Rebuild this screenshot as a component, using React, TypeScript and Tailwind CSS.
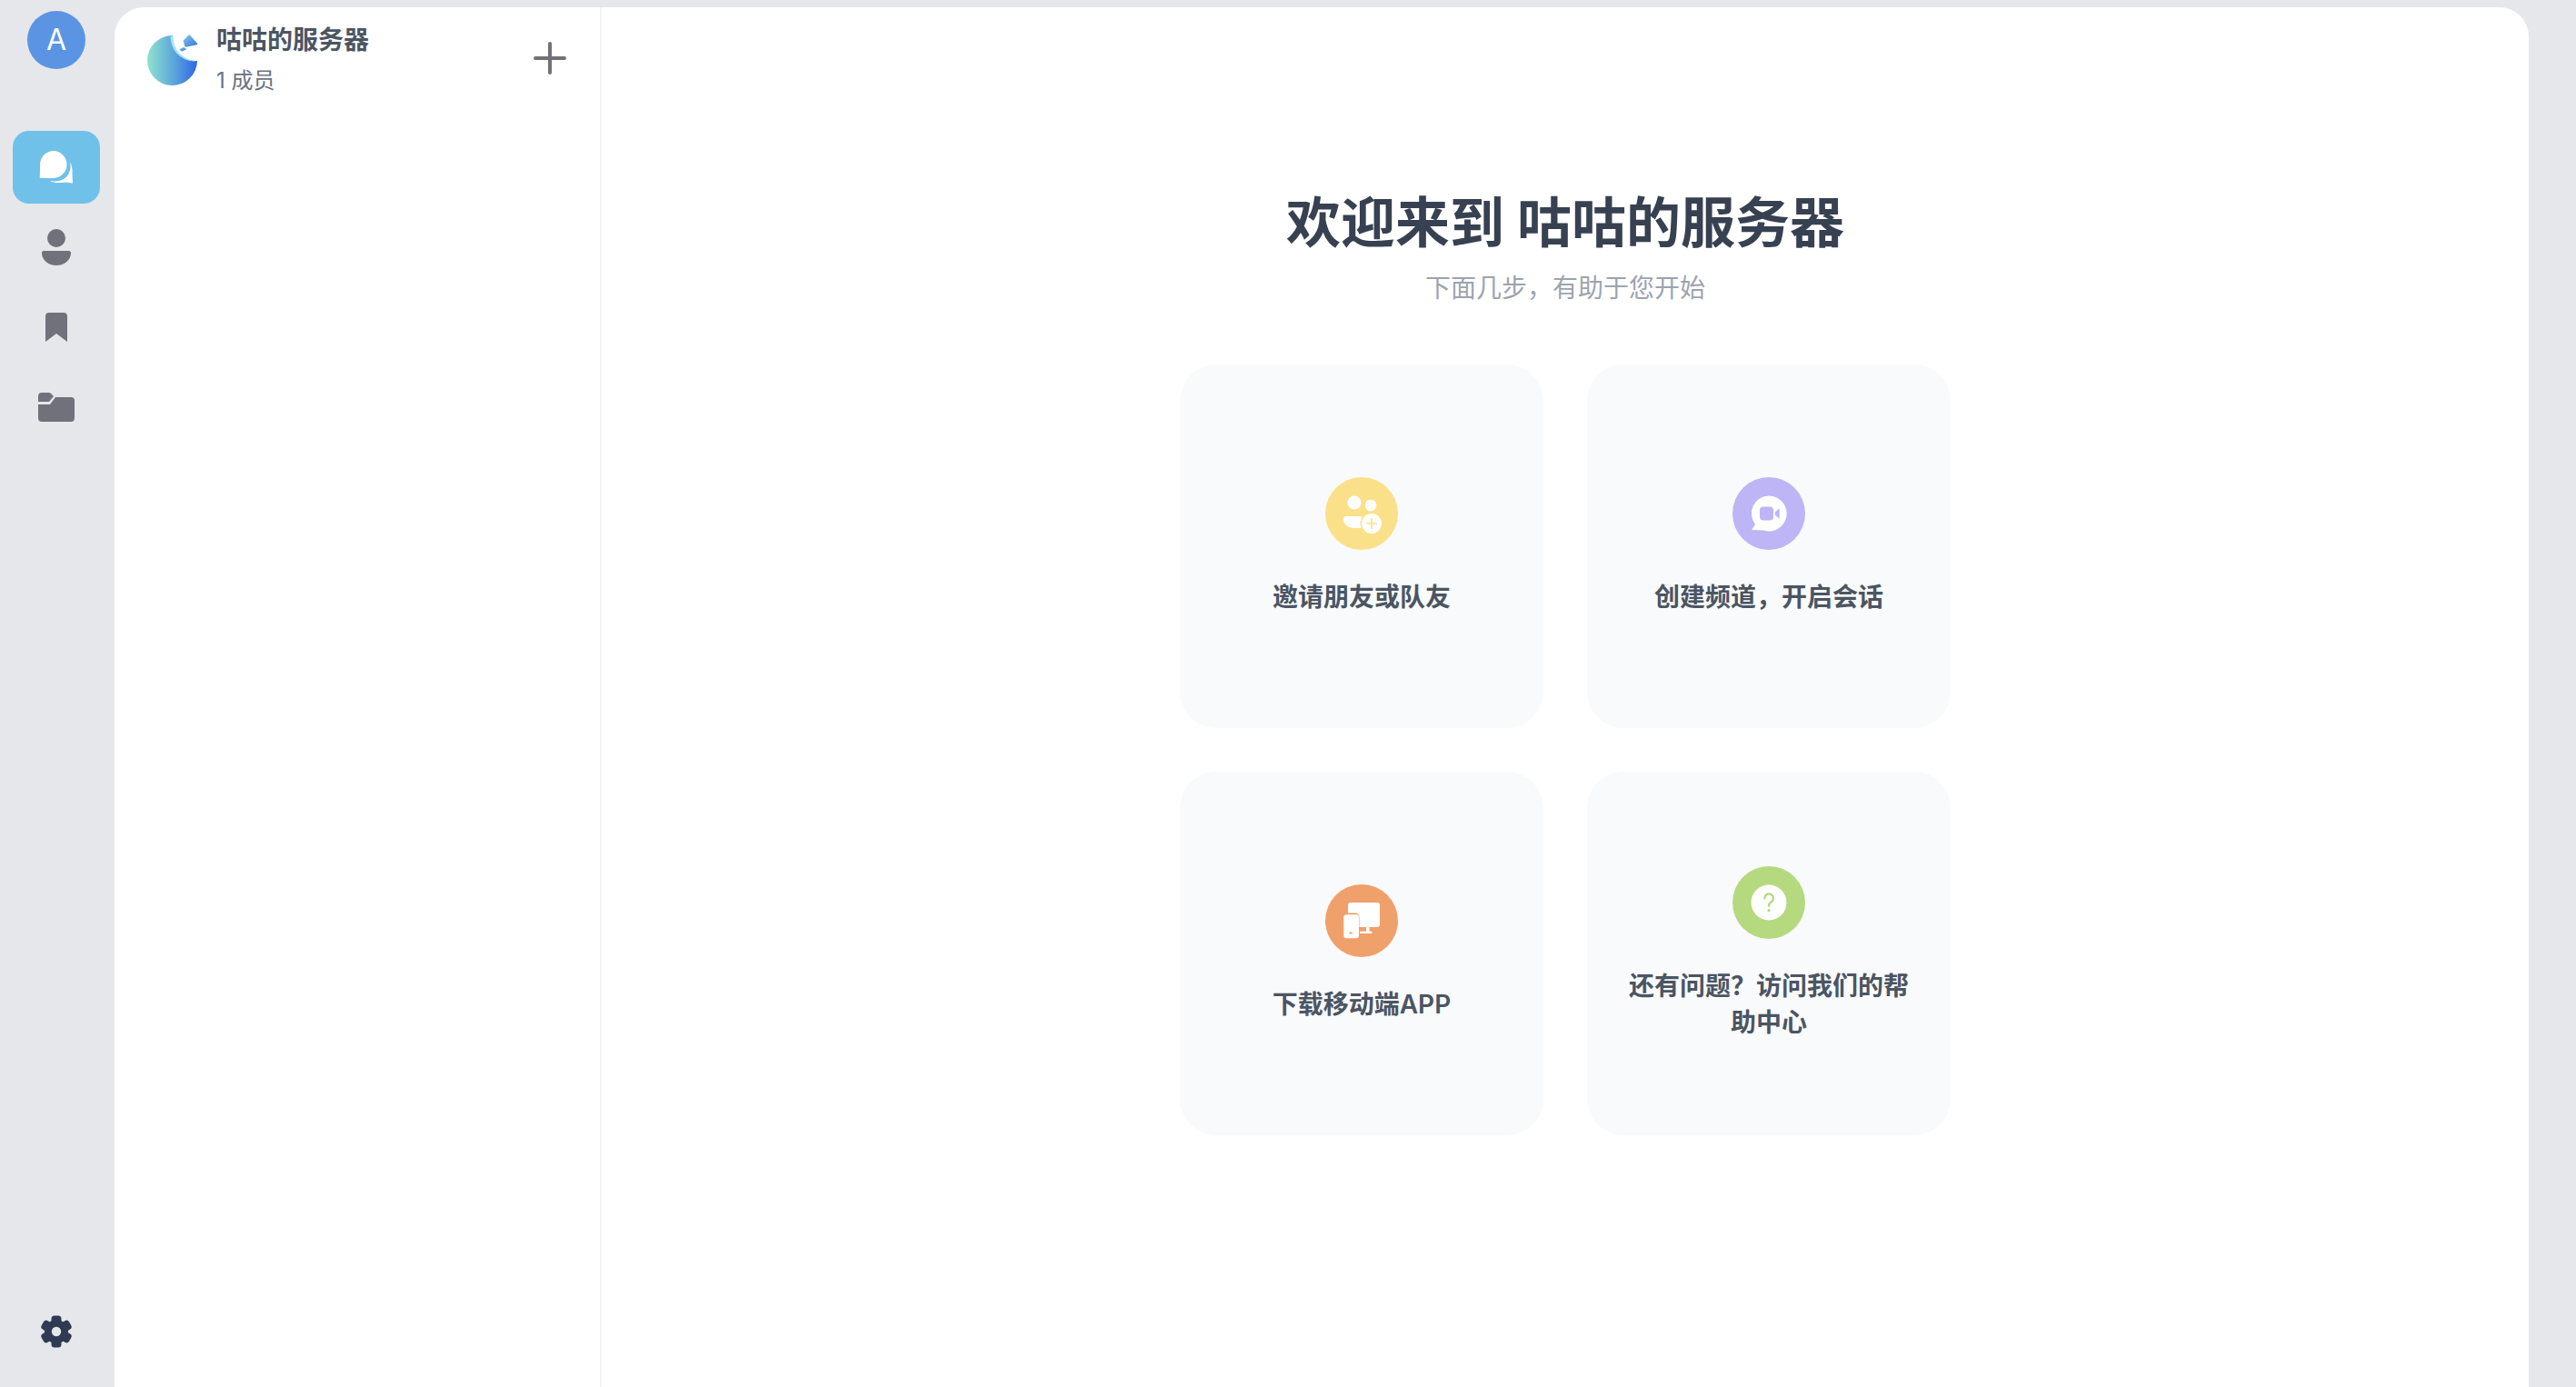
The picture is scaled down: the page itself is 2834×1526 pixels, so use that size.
import React from "react";

const fontStack = { fontFamily: 'Inter, "Noto Sans CJK SC", sans-serif' };

function Logo() {
  return (
    <svg width="64" height="64" viewBox="0 0 64 64">
      <defs>
        <linearGradient id="lg" x1="0" y1="0" x2="1" y2="0">
          <stop offset="0" stopColor="#8fe3cc" />
          <stop offset="0.55" stopColor="#5aa3dc" />
          <stop offset="1" stopColor="#2f66e6" />
        </linearGradient>
        <linearGradient id="lg2" x1="0" y1="0" x2="1" y2="1">
          <stop offset="0" stopColor="#7cc6e0" />
          <stop offset="1" stopColor="#3f74e4" />
        </linearGradient>
      </defs>
      <path d="M32 5A27.5 27.5 0 1 0 59 33A26 26 0 0 1 32 5Z" fill="url(#lg)" />
      <path d="M32.5 5.5A26 26 0 0 0 58.5 33L55 33.5A27 27 0 0 1 29.5 6Z" fill="#a8e2fb" />
      <path d="M50.3 5.3L58.3 14.3L46.3 16.7L44.7 11Z" fill="url(#lg2)" stroke="url(#lg2)" strokeWidth="2" strokeLinejoin="round" />
      <path d="M44 18.5L46.5 20L42 22.2L39.8 20.5Z" fill="url(#lg2)" stroke="url(#lg2)" strokeWidth="1" strokeLinejoin="round" />
    </svg>
  );
}

function ChatIcon() {
  return (
    <svg width="40" height="40" viewBox="0 0 40 40" fill="#ffffff">
      <path d="M16.5 2A15 15 0 1 1 16.5 32L1.7 31.7L2.2 15.5A15 15 0 0 1 16.5 2Z" />
      <path d="M34.5 14C37.5 18 38 23 37.5 27L38 37.7C32 36 26 37 22 37C18.5 37 15.5 36.5 13 35C22 36.5 30 34 33.5 27C36 22 36 18 34.5 14Z" />
    </svg>
  );
}

function PersonIcon() {
  return (
    <svg width="40" height="48" viewBox="0 0 40 48" fill="#71717b">
      <circle cx="20" cy="14" r="10" />
      <path d="M4 30.5C4 28.5 5 28 7 28H33C35 28 36 28.5 36 30.5C36 38 29 44 20 44C11 44 4 38 4 30.5Z" />
    </svg>
  );
}

function BookmarkIcon() {
  return (
    <svg width="24" height="32" viewBox="0 0 24 32" fill="#71717b">
      <path d="M0 4A4 4 0 0 1 4 0H20A4 4 0 0 1 24 4V32L12 23L0 32Z" />
    </svg>
  );
}

function FolderIcon() {
  return (
    <svg width="40" height="32" viewBox="0 0 40 32" fill="#71717b">
      <path d="M0 13H13L19 5H36A4 4 0 0 1 40 9V28A4 4 0 0 1 36 32H4A4 4 0 0 1 0 28Z" />
      <path d="M0 10V4A4 4 0 0 1 4 0H11C13 0 14 .5 15 2L17 4L12 10Z" />
    </svg>
  );
}

function GearIcon() {
  return (
    <svg width="36" height="36" viewBox="0 0 36 36" fill="#2f3b52">
      <circle cx="18" cy="18" r="13" />
      <rect x="12.5" y="0.5" width="11" height="35" rx="3.5" />
      <rect x="12.5" y="0.5" width="11" height="35" rx="3.5" transform="rotate(60 18 18)" />
      <rect x="12.5" y="0.5" width="11" height="35" rx="3.5" transform="rotate(120 18 18)" />
      <circle cx="18" cy="18" r="5.2" fill="#e5e7eb" />
    </svg>
  );
}

function InviteIcon() {
  return (
    <svg width="80" height="80" viewBox="0 0 80 80">
      <circle cx="32" cy="28" r="7.6" fill="#fff" />
      <circle cx="50" cy="31" r="6.3" fill="#fff" />
      <path d="M20 46A3 3 0 0 1 23 43H40V56H32C25 56 20 52 20 46Z" fill="#fff" />
      <circle cx="51" cy="51" r="12.5" fill="#fbe08a" />
      <circle cx="51" cy="51" r="11" fill="#fff" />
      <path d="M51 45.5V56.5M45.5 51H56.5" stroke="#fbe08a" strokeWidth="1.6" strokeLinecap="round" />
    </svg>
  );
}

function VideoIcon() {
  return (
    <svg width="80" height="80" viewBox="0 0 80 80">
      <path d="M40 20.5A19.5 19.5 0 1 1 34 58.5L21 58L25 52A19.5 19.5 0 0 1 40 20.5Z" fill="#fff" />
      <rect x="30" y="32.5" width="15" height="15" rx="4" fill="#bdb5f5" />
      <path d="M46.7 38.5L51.7 34.3V45.7L46.7 41.5Z" fill="#bdb5f5" />
    </svg>
  );
}

function DevicesIcon() {
  return (
    <svg width="80" height="80" viewBox="0 0 80 80">
      <rect x="25" y="20" width="35" height="27" rx="3" fill="#fff" />
      <rect x="45" y="46" width="3.5" height="6" fill="#fff" />
      <rect x="38" y="51.7" width="13.5" height="2.4" rx="1" fill="#fff" />
      <rect x="18.5" y="31.5" width="19" height="29" rx="4.5" fill="#f0a06b" />
      <rect x="20.3" y="33.3" width="16.7" height="26" rx="3" fill="#fff" />
      <rect x="26.6" y="52.6" width="3" height="2" rx="0.5" fill="#f0a06b" />
    </svg>
  );
}

function HelpIcon() {
  return (
    <svg width="80" height="80" viewBox="0 0 80 80">
      <circle cx="40" cy="40" r="19.5" fill="#fff" />
      <path d="M35.3 35.2A4.8 4.8 0 1 1 42.8 39.2C41 40.4 40 41.4 40 43.6" fill="none" stroke="#b5d97f" strokeWidth="2.4" strokeLinecap="round" />
      <circle cx="40" cy="48.7" r="1.6" fill="#b5d97f" />
    </svg>
  );
}

const cards = [
  { label: "邀请朋友或队友", color: "bg-[#fbe08a]", icon: <InviteIcon /> },
  { label: "创建频道，开启会话", color: "bg-[#bdb5f5]", icon: <VideoIcon /> },
  { label: "下载移动端APP", color: "bg-[#f0a06b]", icon: <DevicesIcon /> },
  { label: "还有问题？访问我们的帮助中心", color: "bg-[#b5d97f]", icon: <HelpIcon /> },
];

export default function App() {
  return (
    <div className="flex h-screen w-screen overflow-hidden bg-[#e5e7eb]" style={fontStack}>
      <aside className="flex w-[126px] shrink-0 flex-col items-center pr-[2px]">
        <div className="mt-3 flex h-16 w-16 items-center justify-center rounded-full bg-[#5b94e2] text-[32px] text-white">
          A
        </div>
        <nav className="mt-[68px] flex w-24 flex-col gap-2">
          <div className="flex h-20 items-center justify-center rounded-[18px] bg-[#6fc1e9]">
            <ChatIcon />
          </div>
          <div className="flex h-20 items-center justify-center">
            <PersonIcon />
          </div>
          <div className="flex h-20 items-center justify-center">
            <BookmarkIcon />
          </div>
          <div className="flex h-20 items-center justify-center">
            <FolderIcon />
          </div>
        </nav>
        <div className="mt-auto mb-[21px] flex h-20 w-24 items-center justify-center">
          <GearIcon />
        </div>
      </aside>

      <div className="mt-2 mr-[52px] flex min-w-0 flex-1 overflow-hidden rounded-t-[32px] bg-white">
        <section className="w-[536px] shrink-0 border-r-2 border-[#f3f4f6]">
          <header className="flex items-center pt-4 pr-[31px] pl-8">
            <div className="mt-[3px] shrink-0">
              <Logo />
            </div>
            <div className="ml-4 min-w-0 flex-1">
              <div className="text-[28px] leading-10 font-semibold text-[#4b5563]">咕咕的服务器</div>
              <div className="mt-[9px] text-2xl leading-8 text-[#6b7280]">1 成员</div>
            </div>
            <button className="mb-[2px] flex h-12 w-12 items-center justify-center">
              <svg width="36" height="36" viewBox="0 0 36 36" fill="none" stroke="#71717a" strokeWidth="4" strokeLinecap="round">
                <path d="M18 2V34M2 18H34" />
              </svg>
            </button>
          </header>
        </section>

        <main className="flex min-w-0 flex-1 flex-col items-center pt-[201px]">
          <h1 className="text-[60px] leading-[72px] font-bold text-[#374151]">欢迎来到 咕咕的服务器</h1>
          <p className="mt-4 text-[28px] leading-10 text-[#9ca3af]">下面几步，有助于您开始</p>
          <div className="mt-16 grid grid-cols-2 gap-12">
            {cards.map((c) => (
              <div
                key={c.label}
                className="flex h-[400px] w-[400px] flex-col items-center justify-center rounded-[40px] bg-[#f9fafb] px-10"
              >
                <div className={`flex h-20 w-20 items-center justify-center rounded-full ${c.color}`}>{c.icon}</div>
                <div className="mt-8 text-center text-[28px] leading-10 font-semibold text-[#4b5563]">{c.label}</div>
              </div>
            ))}
          </div>
        </main>
      </div>
    </div>
  );
}
